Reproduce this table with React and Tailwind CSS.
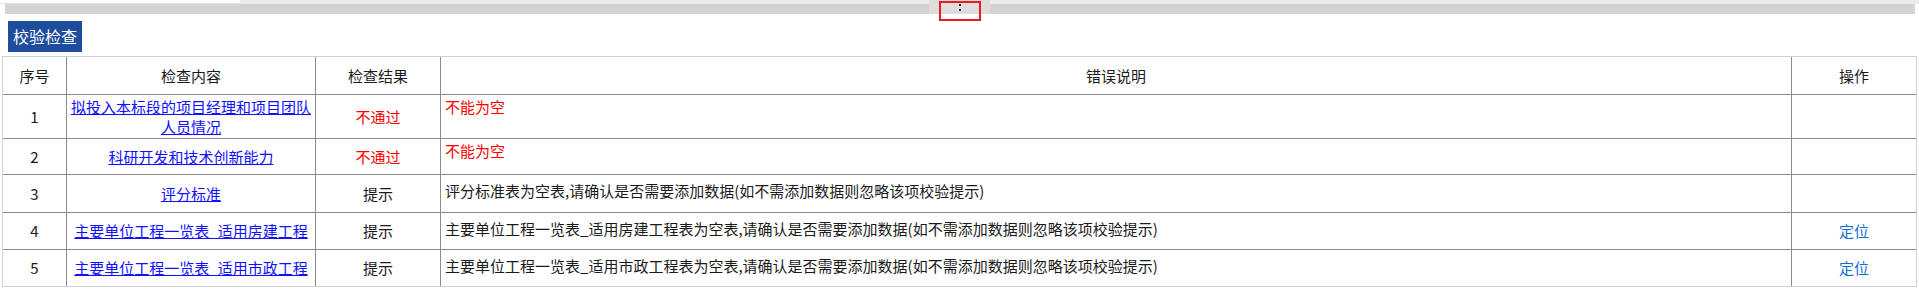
import React from "react";

const rows = [
  {
    no: 1,
    name: ["拟投入本标段的项目经理和项目团队", "人员情况"],
    result: "不通过",
    error: "不能为空",
    h: "h-[44px]",
  },
  { no: 2, name: ["科研开发和技术创新能力"], result: "不通过", error: "不能为空", h: "h-[36px]" },
  {
    no: 3,
    name: ["评分标准"],
    result: "提示",
    msg: "评分标准表为空表,请确认是否需要添加数据(如不需添加数据则忽略该项校验提示)",
    h: "h-[38px]",
  },
  {
    no: 4,
    name: ["主要单位工程一览表_适用房建工程"],
    result: "提示",
    msg: "主要单位工程一览表_适用房建工程表为空表,请确认是否需要添加数据(如不需添加数据则忽略该项校验提示)",
    locate: true,
    h: "h-[37px]",
  },
  {
    no: 5,
    name: ["主要单位工程一览表_适用市政工程"],
    result: "提示",
    msg: "主要单位工程一览表_适用市政工程表为空表,请确认是否需要添加数据(如不需添加数据则忽略该项校验提示)",
    locate: true,
    h: "h-[37px]",
  },
];

const cell = "border-t border-l border-t-[#8c8c8c] border-l-[#8c8c8c] px-1 py-0";

function App() {
  return (
    <div className="w-[1919px] h-[289px] bg-white overflow-hidden font-['Noto_Sans_CJK_SC','Microsoft_YaHei',sans-serif] text-[15px] leading-[20px] text-[#1a1a1a]">
      {/* splitter bar */}
      <div className="relative h-[21px]">
        <div className="flex h-[4px]">
          <div className="w-[240px] bg-white border-b border-[#e4e4e4]" />
          <div className="flex-1 bg-[#ebebeb]" />
        </div>
        <div className="ml-[5px] mr-[4px] h-[10px] bg-[#d3d3d3]" />
        <div className="absolute left-[929px] top-0 w-[61px] h-[14px] bg-[#dddddd] flex flex-col items-center justify-center gap-[3px] pt-[1px]">
          <span className="block w-[2px] h-[2px] bg-[#333]" />
          <span className="block w-[2px] h-[2px] bg-[#333]" />
        </div>
        <div className="absolute left-[939px] top-[1px] w-[42px] h-[20px] border-2 border-[#f01a1a]" />
      </div>

      <div className="ml-[8px] inline-block bg-[#1e4d9d] text-white text-[16px] leading-[31px] h-[31px] px-[5px]">
        校验检查
      </div>

      <table className="ml-[2px] mt-[4px] w-[1915px] table-fixed border-separate border-spacing-0 border border-[#d2d2d2]">
        <colgroup>
          <col className="w-[63px]" />
          <col className="w-[249px]" />
          <col className="w-[125px]" />
          <col className="w-[1351px]" />
          <col className="w-[125px]" />
        </colgroup>
        <thead>
          <tr className="h-[37px]">
            <th className="font-normal text-center px-1">序号</th>
            <th className="font-normal text-center px-1 border-l border-[#8c8c8c]">检查内容</th>
            <th className="font-normal text-center px-1 border-l border-[#8c8c8c]">检查结果</th>
            <th className="font-normal text-center px-1 border-l border-[#8c8c8c]">错误说明</th>
            <th className="font-normal text-center px-1 border-l border-[#8c8c8c]">操作</th>
          </tr>
        </thead>
        <tbody>
          {rows.map((row) => (
            <tr key={row.no} className={row.h}>
              <td className="border-t border-t-[#8c8c8c] text-center align-middle">{row.no}</td>
              <td className={`${cell} text-center align-middle`}>
                <a href="#" className="text-[#1010ff] underline">
                  {row.name.map((n, i) => (
                    <React.Fragment key={i}>
                      {i > 0 && <br />}
                      {n}
                    </React.Fragment>
                  ))}
                </a>
              </td>
              <td
                className={`${cell} text-center align-middle ${
                  row.result === "不通过" ? "text-[#ff0000]" : ""
                }`}
              >
                {row.result}
              </td>
              <td className={`${cell} align-top text-left`}>
                {row.error ? (
                  <div className="pt-[2px] text-[#ff0000]">{row.error}</div>
                ) : (
                  <div className="pt-[6px]">{row.msg}</div>
                )}
              </td>
              <td className={`${cell} text-center align-middle`}>
                {row.locate && (
                  <span className="text-[#0f6fd6] cursor-pointer">定位</span>
                )}
              </td>
            </tr>
          ))}
        </tbody>
      </table>
    </div>
  );
}

export default App;
